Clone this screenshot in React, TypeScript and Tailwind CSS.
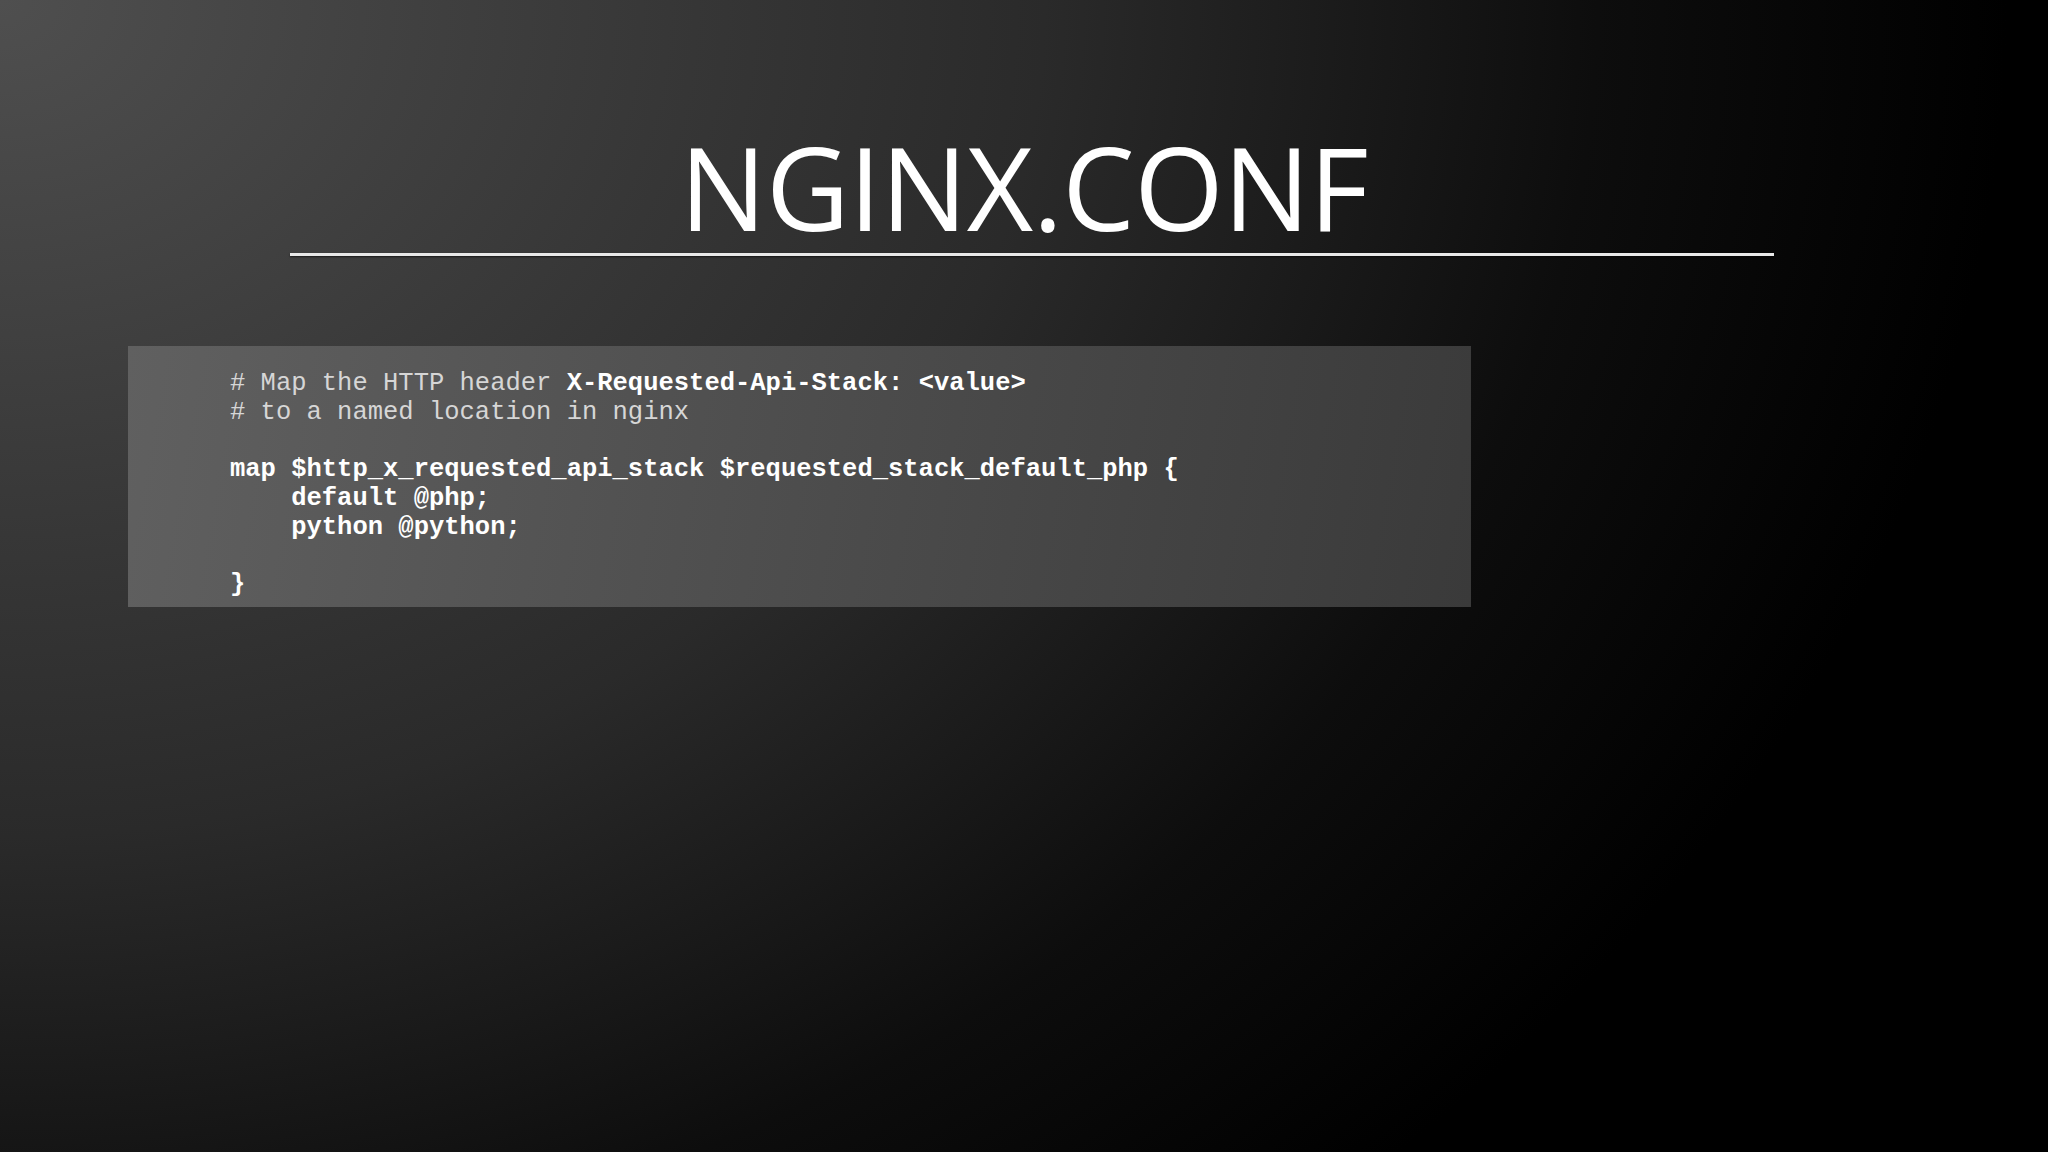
function Comment({ children }: { children: React.ReactNode }) {
  return <span className="font-normal text-[#d6d6d6]">{children}</span>
}

export default function App() {
  return (
    <div className="w-[2048px] h-[1152px] overflow-hidden bg-[radial-gradient(ellipse_2048px_1640px_at_0_0,#4f4f4f_0%,#363636_34%,#2a2a2a_51%,#1a1a1a_66%,#0d0d0d_78%,#000000_98%)]">
      <div className="pt-[129px] flex flex-col">
        <h1 className="text-center text-white font-['Open_Sans',sans-serif] text-[115px] leading-none font-normal tracking-[-0.5px]">
          NGINX.CONF
        </h1>
        <div className="mt-[9px] ml-[290px] w-[1484px] h-[3px] bg-[#e8e8e8] shadow-[0_1px_2px_rgba(0,0,0,0.6)]" />
        <div className="mt-[90px] ml-[128px] w-[1343px] h-[261px] bg-[linear-gradient(100deg,#606060,#3a3a3a)] pt-[24px] pl-[102px]">
          <pre className="font-['Liberation_Mono',monospace] text-[25.5px] leading-[28.7px] font-bold text-white">
            <Comment># Map the HTTP header </Comment>X-Requested-Api-Stack: {"<value>"}
            {"\n"}
            <Comment># to a named location in nginx</Comment>
            {"\n\n"}
            {"map $http_x_requested_api_stack $requested_stack_default_php {\n"}
            {"    default @php;\n"}
            {"    python @python;\n"}
            {"\n"}
            {"}"}
          </pre>
        </div>
      </div>
    </div>
  )
}
